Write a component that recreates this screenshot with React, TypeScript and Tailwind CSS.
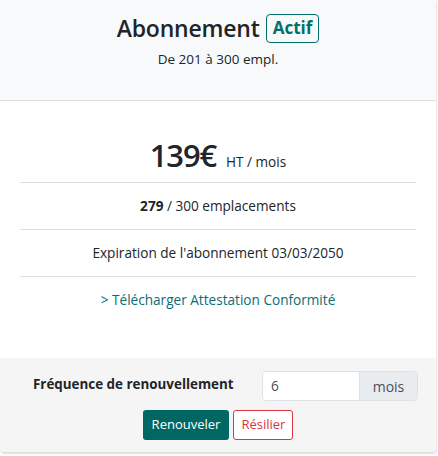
export default function App() {
  return (
    <div className="w-[438px] h-[456px] bg-white font-['Open_Sans',sans-serif] text-[#212529]">
      <div className="w-[436px] rounded-b-[4px] border-b border-[#dcdcdc] shadow-[1px_1px_2px_rgba(0,0,0,0.12)] bg-white overflow-hidden">
        {/* Header */}
        <div className="h-[101px] bg-[#f8f9fa] border-b border-[#dedede] flex flex-col items-center pt-[13px]">
          <div className="flex items-center gap-[6px]">
            <h1 className="text-[23px] font-semibold leading-[30px] tracking-[-0.2px]">Abonnement</h1>
            <span className="border border-[#02706a] rounded-[4px] px-[6px] h-[29px] flex items-center text-[17px] font-bold text-[#02706a]">
              Actif
            </span>
          </div>
          <p className="mt-[6px] text-[13.5px] leading-[20px]">De 201 à 300 empl.</p>
        </div>

        {/* Body */}
        <div className="px-5 pt-[27px] pb-[35px] text-center text-[13.6px]">
          <div className="flex items-baseline justify-center gap-[10px] h-[54px]">
            <span className="text-[31px] font-semibold leading-[54px] tracking-[-1.2px]">139€</span>
            <span className="text-[13.6px]">HT / mois</span>
          </div>
          <div className="border-t border-[#dedede] py-[13px] leading-[20px]">
            <b className="font-bold">279</b> / 300 emplacements
          </div>
          <div className="border-t border-[#dedede] py-[13px] leading-[20px]">
            Expiration de l'abonnement 03/03/2050
          </div>
          <div className="border-t border-[#dedede] py-[13px] leading-[20px]">
            <a className="text-[#0b6d77]">&gt; Télécharger Attestation Conformité</a>
          </div>
        </div>

        {/* Footer */}
        <div className="bg-[#f5f5f5] pt-[13px] pb-[12px] flex flex-col items-center">
          <div className="flex items-start w-full pl-[33px] pr-[18px] justify-between">
            <label className="text-[13.4px] font-bold pt-[3px]">Fréquence de renouvellement</label>
            <div className="flex w-[156px] h-[30px] border border-[#dee2e6] rounded-[4px] overflow-hidden">
              <input
                defaultValue="6"
                className="w-[96px] bg-white px-[8px] text-[13.6px] text-[#495057] outline-none"
              />
              <span className="flex-1 bg-[#e9ecef] border-l border-[#dee2e6] flex items-center justify-center text-[14px] text-[#495057]">
                mois
              </span>
            </div>
          </div>
          <div className="flex gap-[4px] mt-[9px]">
            <button className="h-[30px] px-[9px] rounded-[3px] bg-[#016762] text-white text-[13px]">
              Renouveler
            </button>
            <button className="h-[30px] px-[7px] rounded-[3px] border border-[#dc3545] text-[#dc3545] text-[13px] bg-white">
              Résilier
            </button>
          </div>
        </div>
      </div>
    </div>
  );
}
